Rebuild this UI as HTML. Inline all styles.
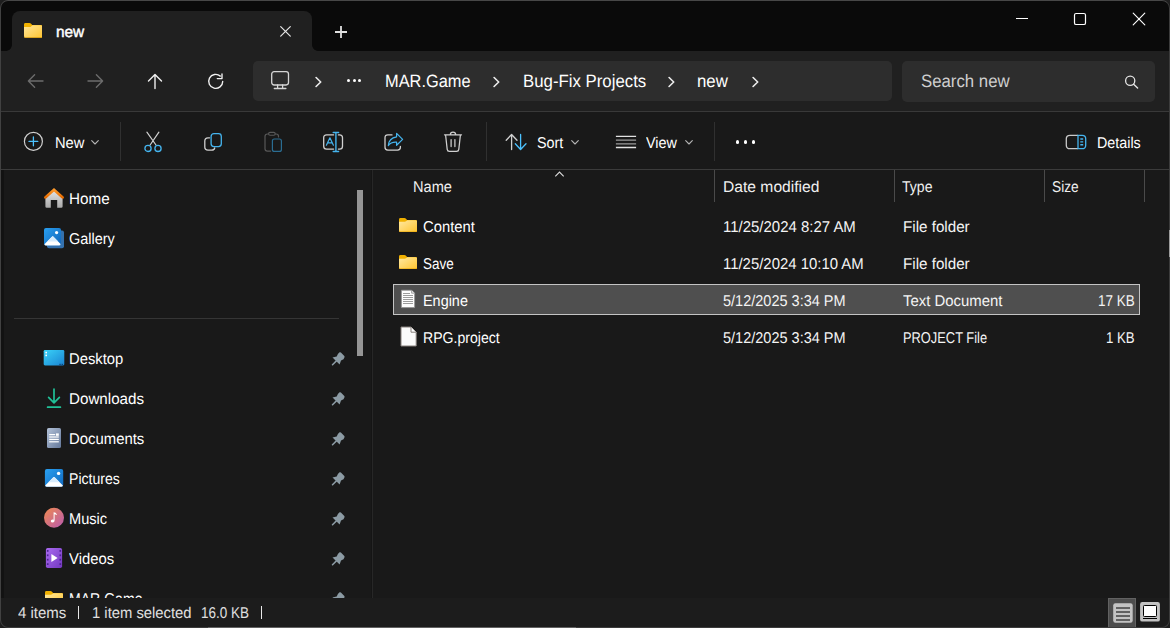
<!DOCTYPE html>
<html>
<head>
<meta charset="utf-8">
<title>new - File Explorer</title>
<style>
*{box-sizing:border-box;margin:0;padding:0}
html,body{width:1170px;height:628px;overflow:hidden;background:#1e1e1e;}
body{font-family:"Liberation Sans",sans-serif;color:#fff;position:relative;font-size:15px;text-rendering:geometricPrecision;}
.abs{position:absolute;display:block}
#win{position:absolute;left:0;top:0;width:1170px;height:628px;background:#191919;border-radius:8px;overflow:hidden;}
#frame{position:absolute;left:0;top:0;width:1170px;height:628px;border:1px solid #3c3c3c;border-top-color:#474747;border-left-color:#414141;border-radius:8px;pointer-events:none;}
#tab{position:absolute;left:12px;top:11px;width:300px;height:40px;background:#202020;border-radius:8px 8px 0 0;}
#tab:before,#tab:after{content:"";position:absolute;bottom:0;width:6px;height:6px;}
#tab:before{left:-6px;background:radial-gradient(circle at 0 0,rgba(32,32,32,0) 5.5px,#202020 6.2px);}
#tab:after{right:-6px;background:radial-gradient(circle at 100% 0,rgba(32,32,32,0) 5.5px,#202020 6.2px);}
.t{position:absolute;white-space:nowrap;line-height:20px;height:20px;transform-origin:0 0;font-variant-ligatures:none;}
</style>
</head>
<body>
<div id="win">
<div class="abs" style="left:0px;top:0px;width:1170px;height:51px;background:#0a0a0a;"></div>
<div id="tab"></div>
<svg class="abs" style="left:23.8px;top:23.2px;" width="18.4" height="14.8" viewBox="0.5 0.7 18.5 14.8" preserveAspectRatio="none"><defs><linearGradient id="fg1" x1="0" y1="0" x2="1" y2="1"><stop offset="0" stop-color="#ffe69a"/><stop offset="1" stop-color="#ffc531"/></linearGradient></defs><path d="M0.5 2.2 Q0.5 0.7 2 0.7 H6 Q6.8 0.7 7.4 1.3 L8.8 2.7 H17.5 Q19 2.7 19 4.2 V6 H0.5 Z" fill="#f2b200"/><path d="M0.5 4.6 H6.4 Q7.1 4.6 7.7 4.1 L9 3 H17.5 Q19 3 19 4.5 V14 Q19 15.5 17.5 15.5 H2 Q0.5 15.5 0.5 14 Z" fill="url(#fg1)"/><path d="M0.5 14 Q0.5 15.5 2 15.5 H17.5 Q19 15.5 19 14 V13.4 Q19 14.9 17.5 14.9 H2 Q0.5 14.9 0.5 13.4Z" fill="#e9a400"/></svg>
<div class="t" style="left:55.80px;top:23px;font-size:15.5px;transform:scaleX(0.9930);color:#fff;-webkit-text-stroke:0.45px #fff;">new</div>
<svg class="abs" style="left:278px;top:24px;" width="15" height="15" viewBox="0 0 15 15" preserveAspectRatio="none"><path d="M2.7 2.6 L12.3 12.2 M12.3 2.6 L2.7 12.2" stroke="#e6e6e6" stroke-width="1.2" stroke-linecap="round" fill="none"/></svg>
<svg class="abs" style="left:333px;top:24px;" width="16" height="16" viewBox="0 0 16 16" preserveAspectRatio="none"><path d="M8 2 V14 M2 8 H14" stroke="#e0e0e0" stroke-width="1.8" fill="none"/></svg>
<svg class="abs" style="left:1014px;top:10px;" width="16" height="16" viewBox="0 0 16 16" preserveAspectRatio="none"><path d="M2 8.5 H14" stroke="#fff" stroke-width="1.1" fill="none"/></svg>
<svg class="abs" style="left:1072px;top:11px;" width="16" height="16" viewBox="0 0 16 16" preserveAspectRatio="none"><rect x="2.5" y="2.5" width="11" height="11" rx="1.6" stroke="#fff" stroke-width="1.2" fill="none"/></svg>
<svg class="abs" style="left:1131px;top:11px;" width="16" height="16" viewBox="0 0 16 16" preserveAspectRatio="none"><path d="M2.2 2.2 L13.8 13.8 M13.8 2.2 L2.2 13.8" stroke="#fff" stroke-width="1.15" stroke-linecap="round" fill="none"/></svg>
<div class="abs" style="left:0px;top:51px;width:1170px;height:60px;background:#202020;"></div>
<svg class="abs" style="left:20px;top:66px;" width="30" height="30" viewBox="0 0 30 30" preserveAspectRatio="none"><path d="M23 15 H8.6 M14.6 8.8 L8.4 15 L14.6 21.2" stroke="#6c6c6c" stroke-width="1.4" stroke-linecap="round" stroke-linejoin="round" fill="none"/></svg>
<svg class="abs" style="left:80px;top:66px;" width="30" height="30" viewBox="0 0 30 30" preserveAspectRatio="none"><path d="M8 15 H22.4 M16.4 8.8 L22.6 15 L16.4 21.2" stroke="#6c6c6c" stroke-width="1.4" stroke-linecap="round" stroke-linejoin="round" fill="none"/></svg>
<svg class="abs" style="left:140px;top:66px;" width="30" height="30" viewBox="0 0 30 30" preserveAspectRatio="none"><path d="M15 22.6 V8.6 M8.5 15 L15 8.4 L21.5 15" stroke="#f0f0f0" stroke-width="1.4" stroke-linecap="round" stroke-linejoin="round" fill="none"/></svg>
<svg class="abs" style="left:200px;top:66px;" width="32" height="30" viewBox="0 0 32 30" preserveAspectRatio="none"><path d="M22.7 15.4 A7 7 0 1 1 20.3 10.1 M22 8 V12.6 H17.3" stroke="#f0f0f0" stroke-width="1.4" stroke-linecap="round" stroke-linejoin="round" fill="none"/></svg>
<div class="abs" style="left:253px;top:61px;width:639px;height:40px;background:#2d2d2d;border-radius:5px;"></div>
<svg class="abs" style="left:268px;top:68px;" width="24" height="24" viewBox="0 0 24 24" preserveAspectRatio="none"><rect x="3.7" y="3.7" width="16.8" height="13.3" rx="2.4" stroke="#d6d6d6" stroke-width="1.3" fill="none"/><path d="M9.6 17 V20.3 M14.6 17 V20.3 M6.3 20.5 H17.9" stroke="#d6d6d6" stroke-width="1.3" stroke-linecap="round" fill="none"/></svg>
<svg class="abs" style="left:314.7px;top:75.6px;" width="8" height="12" viewBox="0 0 8 12" preserveAspectRatio="none"><path d="M1.1 1.5 L5.7 6 L1.1 10.5" stroke="#ececec" stroke-width="1.6" stroke-linecap="round" stroke-linejoin="round" fill="none"/></svg>
<svg class="abs" style="left:492.7px;top:75.6px;" width="8" height="12" viewBox="0 0 8 12" preserveAspectRatio="none"><path d="M1.1 1.5 L5.7 6 L1.1 10.5" stroke="#ececec" stroke-width="1.6" stroke-linecap="round" stroke-linejoin="round" fill="none"/></svg>
<svg class="abs" style="left:667.7px;top:75.6px;" width="8" height="12" viewBox="0 0 8 12" preserveAspectRatio="none"><path d="M1.1 1.5 L5.7 6 L1.1 10.5" stroke="#ececec" stroke-width="1.6" stroke-linecap="round" stroke-linejoin="round" fill="none"/></svg>
<svg class="abs" style="left:752.2px;top:75.6px;" width="8" height="12" viewBox="0 0 8 12" preserveAspectRatio="none"><path d="M1.1 1.5 L5.7 6 L1.1 10.5" stroke="#ececec" stroke-width="1.6" stroke-linecap="round" stroke-linejoin="round" fill="none"/></svg>
<div class="abs" style="left:346.7px;top:78.9px;width:3px;height:3px;border-radius:50%;background:#fff"></div>
<div class="abs" style="left:352.5px;top:78.9px;width:3px;height:3px;border-radius:50%;background:#fff"></div>
<div class="abs" style="left:358.3px;top:78.9px;width:3px;height:3px;border-radius:50%;background:#fff"></div>
<div class="t" style="left:384.60px;top:71px;font-size:17.8px;transform:scaleX(0.9220);color:#fff;">MAR.Game</div>
<div class="t" style="left:522.60px;top:71px;font-size:17.8px;transform:scaleX(0.9445);color:#fff;">Bug-Fix Projects</div>
<div class="t" style="left:697.40px;top:71px;font-size:17.8px;transform:scaleX(0.9450);color:#fff;">new</div>
<div class="abs" style="left:902px;top:61px;width:253.3px;height:41px;background:#2d2d2d;border-radius:5px;"></div>
<div class="t" style="left:920.80px;top:71px;font-size:17.8px;transform:scaleX(0.9442);color:#cfcfcf;">Search new</div>
<svg class="abs" style="left:1123px;top:72.6px;" width="18" height="18" viewBox="0 0 18 18" preserveAspectRatio="none"><circle cx="7.2" cy="7.8" r="4.6" stroke="#e4e4e4" stroke-width="1.3" fill="none"/><path d="M10.6 11.2 L14.6 15.1" stroke="#e4e4e4" stroke-width="1.4" stroke-linecap="round"/></svg>
<div class="abs" style="left:0px;top:111px;width:1170px;height:1px;background:#393939;"></div>
<div class="abs" style="left:0px;top:112px;width:1170px;height:57px;background:#191919;"></div>
<div class="abs" style="left:0px;top:169px;width:1170px;height:1px;background:#3b3b3b;"></div>
<svg class="abs" style="left:22px;top:130px;" width="24" height="24" viewBox="0 0 24 24" preserveAspectRatio="none"><circle cx="11.4" cy="11.4" r="9" stroke="#cfcfcf" stroke-width="1.2" fill="none"/><path d="M11.4 7 V15.8 M7 11.4 H15.8" stroke="#4cc2ff" stroke-width="1.3" stroke-linecap="round"/></svg>
<div class="t" style="left:54.60px;top:134px;font-size:15.6px;transform:scaleX(0.9425);color:#fff;">New</div>
<svg class="abs" style="left:91px;top:139.8px;" width="8" height="5" viewBox="0 0 8 5" preserveAspectRatio="none"><path d="M0.7 0.7 L4 4 L7.3 0.7" stroke="#b4b4b4" stroke-width="1.1" stroke-linecap="round" stroke-linejoin="round" fill="none"/></svg>
<div class="abs" style="left:120px;top:122px;width:1px;height:39px;background:#303030;"></div>
<svg class="abs" style="left:143px;top:130px;" width="22" height="24" viewBox="0 0 22 24" preserveAspectRatio="none"><path d="M3.9 2.2 L13 15 M15.9 2.2 L7.1 15" stroke="#d0d0d0" stroke-width="1.2" stroke-linecap="round" fill="none"/><circle cx="5" cy="18.4" r="3.1" stroke="#45b4ee" stroke-width="1.3" fill="none"/><circle cx="15" cy="18.4" r="3.1" stroke="#45b4ee" stroke-width="1.3" fill="none"/></svg>
<svg class="abs" style="left:202px;top:130px;" width="24" height="24" viewBox="0 0 24 24" preserveAspectRatio="none"><path d="M7.6 7.8 H6 Q2.8 7.8 2.8 11 V17 Q2.8 20.1 6 20.1 H9.6 Q12.6 20.1 12.7 17.9" stroke="#d0d0d0" stroke-width="1.3" stroke-linecap="round" fill="none"/><rect x="9.1" y="3.6" width="10.2" height="13" rx="2.8" stroke="#45b4ee" stroke-width="1.3" fill="none"/></svg>
<svg class="abs" style="left:262px;top:130px;" width="24" height="24" viewBox="0 0 24 24" preserveAspectRatio="none"><path d="M8.6 21.2 H5.4 Q3 21.2 3 18.8 V6.4 Q3 4 5.4 4 H6.4 M13.4 4 H14.2 Q16.5 4 16.5 6.2 V7" stroke="#585858" stroke-width="1.2" stroke-linecap="round" fill="none"/><rect x="6.6" y="2.4" width="6.6" height="2.8" rx="1.4" stroke="#585858" stroke-width="1.1" fill="none"/><rect x="10.4" y="9" width="9" height="12.4" rx="2" stroke="#2b6d92" stroke-width="1.2" fill="none"/></svg>
<svg class="abs" style="left:321px;top:130px;" width="24" height="24" viewBox="0 0 24 24" preserveAspectRatio="none"><path d="M12.6 4.9 H5.6 Q2.7 4.9 2.7 7.8 V16.2 Q2.7 19.1 5.6 19.1 H12.6 M17.4 4.9 H18.6 Q21.5 4.9 21.5 7.8 V16.2 Q21.5 19.1 18.6 19.1 H17.4" stroke="#d0d0d0" stroke-width="1.3" stroke-linecap="round" fill="none"/><path d="M14.9 2.6 V21.4 M12.2 2.5 H17.6 M12.2 21.5 H17.6" stroke="#45b4ee" stroke-width="1.4" stroke-linecap="round" fill="none"/><path d="M5.4 15.2 L8.9 7.8 L12.4 15.2 M6.6 12.8 H11.2" stroke="#45b4ee" stroke-width="1.2" stroke-linecap="round" stroke-linejoin="round" fill="none"/></svg>
<svg class="abs" style="left:382px;top:130px;" width="24" height="24" viewBox="0 0 24 24" preserveAspectRatio="none"><path d="M10 4.9 H5.8 Q3 4.9 3 7.7 V17.3 Q3 20.1 5.8 20.1 H15.6 Q18.4 20.1 18.4 17.3 V16.4" stroke="#d0d0d0" stroke-width="1.3" stroke-linecap="round" fill="none"/><path d="M14.6 3.4 L20.6 9.4 L14.6 15.3 V12.2 Q9 11.8 6.3 15.6 Q6.8 8 14.6 6.8 Z" stroke="#45b4ee" stroke-width="1.2" stroke-linejoin="round" fill="none"/></svg>
<svg class="abs" style="left:441px;top:130px;" width="24" height="24" viewBox="0 0 24 24" preserveAspectRatio="none"><path d="M3.5 4.8 H20.5 M9.3 4.6 Q9.4 2.2 12 2.2 Q14.6 2.2 14.7 4.6 M4.6 5 L6.2 19.4 Q6.4 21.4 8.4 21.4 H15.6 Q17.6 21.4 17.8 19.4 L19.4 5 M10.1 9.6 V16.6 M13.9 9.6 V16.6" stroke="#d0d0d0" stroke-width="1.25" stroke-linecap="round" stroke-linejoin="round" fill="none"/></svg>
<div class="abs" style="left:486px;top:122px;width:1px;height:39px;background:#303030;"></div>
<svg class="abs" style="left:504px;top:130px;" width="24" height="24" viewBox="0 0 24 24" preserveAspectRatio="none"><path d="M7.6 19.6 V4.6 M2.2 10.2 L7.6 4.5 L13 10.2" stroke="#d0d0d0" stroke-width="1.3" stroke-linecap="round" stroke-linejoin="round" fill="none"/><path d="M16.6 4.4 V19.4 M11.3 13.8 L16.6 19.5 L22 13.8" stroke="#4cc2ff" stroke-width="1.3" stroke-linecap="round" stroke-linejoin="round" fill="none"/></svg>
<div class="t" style="left:536.80px;top:134px;font-size:15.6px;transform:scaleX(0.9196);color:#fff;">Sort</div>
<svg class="abs" style="left:571.1px;top:139.8px;" width="8" height="5" viewBox="0 0 8 5" preserveAspectRatio="none"><path d="M0.7 0.7 L4 4 L7.3 0.7" stroke="#b4b4b4" stroke-width="1.1" stroke-linecap="round" stroke-linejoin="round" fill="none"/></svg>
<svg class="abs" style="left:614px;top:130px;" width="24" height="24" viewBox="0 0 24 24" preserveAspectRatio="none"><path d="M1.9 6.4 H22.1 M1.9 17.5 H22.1" stroke="#e2e2e2" stroke-width="1.3"/><path d="M1.9 10.1 H22.1 M1.9 13.8 H22.1" stroke="#9c9c9c" stroke-width="1.3"/></svg>
<div class="t" style="left:646.20px;top:134px;font-size:15.6px;transform:scaleX(0.9226);color:#fff;">View</div>
<svg class="abs" style="left:685px;top:139.8px;" width="8" height="5" viewBox="0 0 8 5" preserveAspectRatio="none"><path d="M0.7 0.7 L4 4 L7.3 0.7" stroke="#b4b4b4" stroke-width="1.1" stroke-linecap="round" stroke-linejoin="round" fill="none"/></svg>
<div class="abs" style="left:714px;top:122px;width:1px;height:39px;background:#303030;"></div>
<div class="abs" style="left:735.7px;top:140.1px;width:3.8px;height:3.8px;border-radius:50%;background:#fff"></div>
<div class="abs" style="left:743.7px;top:140.1px;width:3.8px;height:3.8px;border-radius:50%;background:#fff"></div>
<div class="abs" style="left:751.7px;top:140.1px;width:3.8px;height:3.8px;border-radius:50%;background:#fff"></div>
<svg class="abs" style="left:1064px;top:132px;" width="24" height="20.2" viewBox="0 0 24 20.2" preserveAspectRatio="none"><path d="M14 3.3 H6 Q2.3 3.3 2.3 6.8 V13.2 Q2.3 16.7 6 16.7 H14" stroke="#c9c9c9" stroke-width="1.3" fill="none"/><path d="M14 3.3 H18.2 Q21.7 3.3 21.7 6.8 V13.2 Q21.7 16.7 18.2 16.7 H14 Z" stroke="#45b4ee" stroke-width="1.3" fill="none"/><path d="M16.3 7 H19.2 M16.3 9.9 H19.2 M16.3 12.8 H19.2" stroke="#45b4ee" stroke-width="1.4"/></svg>
<div class="t" style="left:1096.80px;top:134px;font-size:15.6px;transform:scaleX(0.9182);color:#fff;">Details</div>
<div class="abs" style="left:0px;top:170px;width:1170px;height:428px;background:#191919;"></div>
<div class="abs" style="left:1px;top:170px;width:3px;height:428px;background:#121212;"></div>
<div class="abs" style="left:357px;top:190px;width:6px;height:166px;background:#969696;"></div>
<div class="abs" style="left:372px;top:170px;width:1px;height:428px;background:#272727;"></div>
<div class="abs" style="left:371px;top:170px;width:1px;height:428px;background:#151515;"></div>
<div class="abs" style="left:14px;top:317.5px;width:325px;height:1px;background:#353535;"></div>
<svg class="abs" style="left:43px;top:187px;" width="22" height="22" viewBox="0 0 22 22" preserveAspectRatio="none"><defs><linearGradient id="hg" x1="0" y1="0" x2="0" y2="1"><stop offset="0" stop-color="#e6e6e6"/><stop offset="1" stop-color="#a9a9a9"/></linearGradient><linearGradient id="hr" x1="0" y1="0" x2="0" y2="1"><stop offset="0" stop-color="#ff9a2a"/><stop offset="1" stop-color="#e46a00"/></linearGradient></defs><path d="M2.4 9.8 L11 2.8 L19.6 9.8 V19.4 Q19.6 20.8 18.2 20.8 H14.2 V13 H7.8 V20.8 H3.8 Q2.4 20.8 2.4 19.4 Z" fill="url(#hg)"/><path d="M2.3 10.4 L11 2.8 L19.7 10.4" stroke="url(#hr)" stroke-width="2.6" stroke-linecap="round" stroke-linejoin="miter" fill="none"/></svg>
<div class="t" style="left:69.40px;top:190px;font-size:15.6px;transform:scaleX(0.9784);color:#fff;">Home</div>
<svg class="abs" style="left:43px;top:227px;" width="22" height="22" viewBox="0 0 22 22" preserveAspectRatio="none"><defs><linearGradient id="gg" x1="0" y1="0" x2="1" y2="1"><stop offset="0" stop-color="#2aa0f0"/><stop offset="1" stop-color="#0f63b8"/></linearGradient></defs><rect x="4" y="3.6" width="17" height="17.6" rx="2" fill="#3d8fe0" opacity="0.75"/><rect x="1" y="1" width="17" height="17.6" rx="2" fill="url(#gg)"/><path d="M1.4 17.2 L9.2 9.6 Q9.7 9.1 10.2 9.6 L17.6 17 Q17.6 18.6 16 18.6 H3 Q1.6 18.6 1.4 17.2Z" fill="#fff"/><path d="M4.2 14.6 L9.2 9.6 Q9.7 9.1 10.2 9.6 L15.2 14.6 Z" fill="#d7ebfb"/><circle cx="13.6" cy="5.6" r="1.6" fill="#fff"/></svg>
<div class="t" style="left:69.40px;top:230px;font-size:15.6px;transform:scaleX(0.9271);color:#fff;">Gallery</div>
<svg class="abs" style="left:43px;top:349px;" width="22" height="18" viewBox="0 0 22 18" preserveAspectRatio="none"><defs><linearGradient id="dg" x1="0" y1="0" x2="1" y2="1"><stop offset="0" stop-color="#3ad2f8"/><stop offset="1" stop-color="#1a84d2"/></linearGradient></defs><rect x="0.7" y="1" width="20.6" height="15.4" rx="1.3" fill="url(#dg)"/><rect x="2.4" y="2.8" width="1.6" height="1.6" fill="#fff"/><rect x="2.4" y="5.6" width="1.6" height="1.6" fill="#fff"/><rect x="16.4" y="14.8" width="1.3" height="1.3" fill="#0c3f74"/><rect x="18.6" y="14.8" width="1.3" height="1.3" fill="#0c3f74"/></svg>
<div class="t" style="left:69.40px;top:350px;font-size:15.6px;transform:scaleX(0.9485);color:#fff;">Desktop</div>
<svg class="abs" style="left:44px;top:387px;" width="20" height="22" viewBox="0 0 20 22" preserveAspectRatio="none"><path d="M10 2 V15.6 M4.6 10.4 L10 15.9 L15.4 10.4 M3.6 20.2 H16.4" stroke="#20c198" stroke-width="1.7" stroke-linecap="round" stroke-linejoin="round" fill="none"/></svg>
<div class="t" style="left:69.40px;top:390px;font-size:15.6px;transform:scaleX(0.9728);color:#fff;">Downloads</div>
<svg class="abs" style="left:45px;top:427px;" width="18" height="22" viewBox="0 0 18 22" preserveAspectRatio="none"><defs><linearGradient id="dcg" x1="0" y1="0" x2="1" y2="1"><stop offset="0" stop-color="#b3c2d8"/><stop offset="1" stop-color="#64789a"/></linearGradient></defs><rect x="2" y="1" width="14" height="20" rx="1.6" fill="url(#dcg)"/><rect x="4.2" y="7" width="6" height="1.2" fill="#fff"/><rect x="4.2" y="9.4" width="9.6" height="1.2" fill="#fff"/><rect x="4.2" y="11.8" width="9.6" height="1.2" fill="#fff"/><rect x="4.2" y="14.2" width="9.6" height="1.2" fill="#fff"/><rect x="11" y="6.4" width="2.8" height="2.4" fill="#fff"/></svg>
<div class="t" style="left:69.40px;top:430px;font-size:15.6px;transform:scaleX(0.9544);color:#fff;">Documents</div>
<svg class="abs" style="left:44px;top:468px;" width="20" height="20" viewBox="0 0 20 20" preserveAspectRatio="none"><defs><linearGradient id="pg" x1="0" y1="0" x2="1" y2="1"><stop offset="0" stop-color="#2aa0f0"/><stop offset="1" stop-color="#1068bf"/></linearGradient></defs><rect x="0.9" y="1" width="18.3" height="17.8" rx="2" fill="url(#pg)"/><path d="M1.2 17.4 L9.4 9.2 Q10 8.6 10.6 9.2 L18.9 17.4 Q18.7 18.8 17.2 18.8 H2.9 Q1.4 18.8 1.2 17.4Z" fill="#fff"/><path d="M4.4 14.2 L9.4 9.2 Q10 8.6 10.6 9.2 L15.6 14.2 Z" fill="#d7ebfb"/><circle cx="14.6" cy="5.4" r="1.7" fill="#fff"/></svg>
<div class="t" style="left:69.40px;top:470px;font-size:15.6px;transform:scaleX(0.9033);color:#fff;">Pictures</div>
<svg class="abs" style="left:43px;top:507px;" width="22" height="22" viewBox="0 0 22 22" preserveAspectRatio="none"><defs><linearGradient id="mg" x1="0" y1="0" x2="1" y2="1"><stop offset="0" stop-color="#f08a4e"/><stop offset="1" stop-color="#b85ab0"/></linearGradient></defs><circle cx="11" cy="10.8" r="10" fill="url(#mg)"/><path d="M10.6 5.2 Q12.6 5 14 7.6 L13.4 8 Q12.4 7 11.6 7.2 V13.6 Q11.6 15.6 9.6 15.6 Q7.8 15.6 7.8 14.1 Q7.8 12.6 9.6 12.6 Q10.2 12.6 10.6 12.8 Z" fill="#fff"/></svg>
<div class="t" style="left:69.40px;top:510px;font-size:15.6px;transform:scaleX(0.9374);color:#fff;">Music</div>
<svg class="abs" style="left:44px;top:547px;" width="20" height="22" viewBox="0 0 20 22" preserveAspectRatio="none"><defs><linearGradient id="vg" x1="0" y1="0" x2="1" y2="1"><stop offset="0" stop-color="#a96af0"/><stop offset="1" stop-color="#7438c0"/></linearGradient></defs><rect x="1.9" y="1" width="16.2" height="20" rx="1.8" fill="url(#vg)"/><path d="M7.4 7 L13.6 11 L7.4 15 Z" fill="#fff"/><g fill="#4b2390"><rect x="2.9" y="3" width="1.6" height="1.8"/><rect x="2.9" y="7.4" width="1.6" height="1.8"/><rect x="2.9" y="11.8" width="1.6" height="1.8"/><rect x="2.9" y="16.2" width="1.6" height="1.8"/><rect x="15.5" y="3" width="1.6" height="1.8"/><rect x="15.5" y="7.4" width="1.6" height="1.8"/><rect x="15.5" y="11.8" width="1.6" height="1.8"/><rect x="15.5" y="16.2" width="1.6" height="1.8"/></g></svg>
<div class="t" style="left:69.40px;top:550px;font-size:15.6px;transform:scaleX(0.9515);color:#fff;">Videos</div>
<svg class="abs" style="left:44.9px;top:591.4px;" width="18.1" height="14.3" viewBox="0.5 0.7 18.5 14.8" preserveAspectRatio="none"><defs><linearGradient id="fgs" x1="0" y1="0" x2="1" y2="1"><stop offset="0" stop-color="#ffe9a2"/><stop offset="1" stop-color="#ffc42e"/></linearGradient></defs><path d="M0.5 2.2 Q0.5 0.7 2 0.7 H6 Q6.8 0.7 7.4 1.3 L8.8 2.7 H17.5 Q19 2.7 19 4.2 V6 H0.5 Z" fill="#f0b000"/><path d="M0.5 4.6 H6.4 Q7.1 4.6 7.7 4.1 L9 3 H17.5 Q19 3 19 4.5 V14 Q19 15.5 17.5 15.5 H2 Q0.5 15.5 0.5 14 Z" fill="url(#fgs)"/><path d="M0.5 14 Q0.5 15.5 2 15.5 H17.5 Q19 15.5 19 14 V13.3 Q19 14.8 17.5 14.8 H2 Q0.5 14.8 0.5 13.3Z" fill="#e6a100"/></svg>
<div class="t" style="left:69.40px;top:590px;font-size:15.6px;transform:scaleX(0.9018);color:#fff;">MAR.Game</div>
<svg class="abs" style="left:331.3px;top:351.9px;" width="14" height="14" viewBox="0 0 14 14" preserveAspectRatio="none"><path d="M8.56 0.36 Q9.3 0 9.9 0.6 L13.3 4.1 Q13.9 4.8 13.4 5.5 L12.5 7.2 L10 8.5 L8.6 12.6 L1.5 5.6 L5.7 4.5 L6.9 2 Z" fill="#8c9ba4"/><path d="M5.4 8.9 L1.5 12.7" stroke="#8c9ba4" stroke-width="1.5" stroke-linecap="round"/></svg>
<svg class="abs" style="left:331.3px;top:391.9px;" width="14" height="14" viewBox="0 0 14 14" preserveAspectRatio="none"><path d="M8.56 0.36 Q9.3 0 9.9 0.6 L13.3 4.1 Q13.9 4.8 13.4 5.5 L12.5 7.2 L10 8.5 L8.6 12.6 L1.5 5.6 L5.7 4.5 L6.9 2 Z" fill="#8c9ba4"/><path d="M5.4 8.9 L1.5 12.7" stroke="#8c9ba4" stroke-width="1.5" stroke-linecap="round"/></svg>
<svg class="abs" style="left:331.3px;top:431.9px;" width="14" height="14" viewBox="0 0 14 14" preserveAspectRatio="none"><path d="M8.56 0.36 Q9.3 0 9.9 0.6 L13.3 4.1 Q13.9 4.8 13.4 5.5 L12.5 7.2 L10 8.5 L8.6 12.6 L1.5 5.6 L5.7 4.5 L6.9 2 Z" fill="#8c9ba4"/><path d="M5.4 8.9 L1.5 12.7" stroke="#8c9ba4" stroke-width="1.5" stroke-linecap="round"/></svg>
<svg class="abs" style="left:331.3px;top:471.9px;" width="14" height="14" viewBox="0 0 14 14" preserveAspectRatio="none"><path d="M8.56 0.36 Q9.3 0 9.9 0.6 L13.3 4.1 Q13.9 4.8 13.4 5.5 L12.5 7.2 L10 8.5 L8.6 12.6 L1.5 5.6 L5.7 4.5 L6.9 2 Z" fill="#8c9ba4"/><path d="M5.4 8.9 L1.5 12.7" stroke="#8c9ba4" stroke-width="1.5" stroke-linecap="round"/></svg>
<svg class="abs" style="left:331.3px;top:511.9px;" width="14" height="14" viewBox="0 0 14 14" preserveAspectRatio="none"><path d="M8.56 0.36 Q9.3 0 9.9 0.6 L13.3 4.1 Q13.9 4.8 13.4 5.5 L12.5 7.2 L10 8.5 L8.6 12.6 L1.5 5.6 L5.7 4.5 L6.9 2 Z" fill="#8c9ba4"/><path d="M5.4 8.9 L1.5 12.7" stroke="#8c9ba4" stroke-width="1.5" stroke-linecap="round"/></svg>
<svg class="abs" style="left:331.3px;top:551.9px;" width="14" height="14" viewBox="0 0 14 14" preserveAspectRatio="none"><path d="M8.56 0.36 Q9.3 0 9.9 0.6 L13.3 4.1 Q13.9 4.8 13.4 5.5 L12.5 7.2 L10 8.5 L8.6 12.6 L1.5 5.6 L5.7 4.5 L6.9 2 Z" fill="#8c9ba4"/><path d="M5.4 8.9 L1.5 12.7" stroke="#8c9ba4" stroke-width="1.5" stroke-linecap="round"/></svg>
<svg class="abs" style="left:331.3px;top:591.9px;" width="14" height="14" viewBox="0 0 14 14" preserveAspectRatio="none"><path d="M8.56 0.36 Q9.3 0 9.9 0.6 L13.3 4.1 Q13.9 4.8 13.4 5.5 L12.5 7.2 L10 8.5 L8.6 12.6 L1.5 5.6 L5.7 4.5 L6.9 2 Z" fill="#8c9ba4"/><path d="M5.4 8.9 L1.5 12.7" stroke="#8c9ba4" stroke-width="1.5" stroke-linecap="round"/></svg>
<div class="t" style="left:412.80px;top:178px;font-size:15.6px;transform:scaleX(0.9375);color:#f0f0f0;">Name</div>
<div class="t" style="left:722.80px;top:178px;font-size:15.6px;transform:scaleX(1.0026);color:#f0f0f0;">Date modified</div>
<div class="t" style="left:902.20px;top:178px;font-size:15.6px;transform:scaleX(0.9024);color:#f0f0f0;">Type</div>
<div class="t" style="left:1052.20px;top:178px;font-size:15.6px;transform:scaleX(0.8797);color:#f0f0f0;">Size</div>
<div class="abs" style="left:714px;top:170px;width:1px;height:32px;background:#4a4a4a;"></div>
<div class="abs" style="left:894px;top:170px;width:1px;height:32px;background:#4a4a4a;"></div>
<div class="abs" style="left:1044px;top:170px;width:1px;height:32px;background:#4a4a4a;"></div>
<div class="abs" style="left:1144px;top:170px;width:1px;height:32px;background:#4a4a4a;"></div>
<svg class="abs" style="left:554px;top:170.5px;" width="11" height="7" viewBox="0 0 11 7" preserveAspectRatio="none"><path d="M1.3 5.3 L5.5 1.1 L9.7 5.3" stroke="#dcdcdc" stroke-width="1.1" fill="none"/></svg>
<div class="abs" style="left:393px;top:284px;width:747px;height:30.5px;background:#4f4f4f;border:1px solid #c4c4c4;"></div>
<svg class="abs" style="left:398.9px;top:217.8px;" width="18.1" height="14.3" viewBox="0.5 0.7 18.5 14.8" preserveAspectRatio="none"><defs><linearGradient id="ff1" x1="0" y1="0" x2="1" y2="1"><stop offset="0" stop-color="#ffe9a2"/><stop offset="1" stop-color="#ffc42e"/></linearGradient></defs><path d="M0.5 2.2 Q0.5 0.7 2 0.7 H6 Q6.8 0.7 7.4 1.3 L8.8 2.7 H17.5 Q19 2.7 19 4.2 V6 H0.5 Z" fill="#f0b000"/><path d="M0.5 4.6 H6.4 Q7.1 4.6 7.7 4.1 L9 3 H17.5 Q19 3 19 4.5 V14 Q19 15.5 17.5 15.5 H2 Q0.5 15.5 0.5 14 Z" fill="url(#ff1)"/><path d="M0.5 14 Q0.5 15.5 2 15.5 H17.5 Q19 15.5 19 14 V13.3 Q19 14.8 17.5 14.8 H2 Q0.5 14.8 0.5 13.3Z" fill="#e6a100"/></svg>
<svg class="abs" style="left:398.9px;top:254.8px;" width="18.1" height="14.3" viewBox="0.5 0.7 18.5 14.8" preserveAspectRatio="none"><defs><linearGradient id="ff2" x1="0" y1="0" x2="1" y2="1"><stop offset="0" stop-color="#ffe9a2"/><stop offset="1" stop-color="#ffc42e"/></linearGradient></defs><path d="M0.5 2.2 Q0.5 0.7 2 0.7 H6 Q6.8 0.7 7.4 1.3 L8.8 2.7 H17.5 Q19 2.7 19 4.2 V6 H0.5 Z" fill="#f0b000"/><path d="M0.5 4.6 H6.4 Q7.1 4.6 7.7 4.1 L9 3 H17.5 Q19 3 19 4.5 V14 Q19 15.5 17.5 15.5 H2 Q0.5 15.5 0.5 14 Z" fill="url(#ff2)"/><path d="M0.5 14 Q0.5 15.5 2 15.5 H17.5 Q19 15.5 19 14 V13.3 Q19 14.8 17.5 14.8 H2 Q0.5 14.8 0.5 13.3Z" fill="#e6a100"/></svg>
<svg class="abs" style="left:400px;top:289px;" width="16" height="20" viewBox="0 0 16 20" preserveAspectRatio="none"><path d="M1.4 1.2 H11.6 L14.6 4.2 V18.6 H1.4 Z" fill="#fdfdfd" stroke="#8f8f8f" stroke-width="0.8"/><path d="M11.6 1.2 V4.2 H14.6" fill="#e8e8e8" stroke="#8f8f8f" stroke-width="0.8"/><path d="M3 4.5 H10 M3 6.5 H13 M3 8.5 H13 M3 10.5 H13 M3 12.5 H13 M3 14.5 H13" stroke="#9c9c9c" stroke-width="1"/></svg>
<svg class="abs" style="left:399.5px;top:325.5px;" width="18" height="22" viewBox="0 0 18 22" preserveAspectRatio="none"><path d="M1 1 H11 L16.2 6.2 V20 H1 Z" fill="#fbfbfb" stroke="#857f7a" stroke-width="1"/><path d="M11 1 V6.2 H16.2" fill="#fff" stroke="#857f7a" stroke-width="1"/></svg>
<div class="t" style="left:423.40px;top:218px;font-size:15.6px;transform:scaleX(0.9497);color:#fff;">Content</div>
<div class="t" style="left:722.80px;top:218px;font-size:15.6px;transform:scaleX(0.9596);color:#f4f4f4;">11/25/2024 8:27 AM</div>
<div class="t" style="left:902.60px;top:218px;font-size:15.6px;transform:scaleX(0.9737);color:#f4f4f4;">File folder</div>
<div class="t" style="left:423.40px;top:255px;font-size:15.6px;transform:scaleX(0.8636);color:#fff;">Save</div>
<div class="t" style="left:722.80px;top:255px;font-size:15.6px;transform:scaleX(0.9562);color:#f4f4f4;">11/25/2024 10:10 AM</div>
<div class="t" style="left:902.60px;top:255px;font-size:15.6px;transform:scaleX(0.9737);color:#f4f4f4;">File folder</div>
<div class="t" style="left:423.40px;top:292px;font-size:15.6px;transform:scaleX(0.9248);color:#fff;">Engine</div>
<div class="t" style="left:722.80px;top:292px;font-size:15.6px;transform:scaleX(0.9306);color:#f4f4f4;">5/12/2025 3:34 PM</div>
<div class="t" style="left:902.60px;top:292px;font-size:15.6px;transform:scaleX(0.9563);color:#f4f4f4;">Text Document</div>
<div class="t" style="left:1098.00px;top:292px;font-size:15.6px;transform:scaleX(0.8635);color:#f4f4f4;">17 KB</div>
<div class="t" style="left:423.40px;top:329px;font-size:15.6px;transform:scaleX(0.9029);color:#fff;">RPG.project</div>
<div class="t" style="left:722.80px;top:329px;font-size:15.6px;transform:scaleX(0.9306);color:#f4f4f4;">5/12/2025 3:34 PM</div>
<div class="t" style="left:902.60px;top:329px;font-size:15.6px;transform:scaleX(0.8245);color:#f4f4f4;">PROJECT File</div>
<div class="t" style="left:1106.00px;top:329px;font-size:15.6px;transform:scaleX(0.8491);color:#f4f4f4;">1 KB</div>
<div class="abs" style="left:0px;top:598px;width:1170px;height:30px;background:#1c1c1c;"></div>
<div class="t" style="left:18.00px;top:604px;font-size:15.6px;transform:scaleX(0.9602);color:#e0e0e0;">4 items</div>
<div class="abs" style="left:78px;top:606px;width:1.2px;height:13px;background:#e8e8e8;"></div>
<div class="t" style="left:91.70px;top:604px;font-size:15.6px;transform:scaleX(0.9495);color:#e0e0e0;">1 item selected</div>
<div class="t" style="left:200.60px;top:604px;font-size:15.6px;transform:scaleX(0.8631);color:#e0e0e0;">16.0 KB</div>
<div class="abs" style="left:261.2px;top:606px;width:1.2px;height:13px;background:#e8e8e8;"></div>
<div class="abs" style="left:1108px;top:598px;width:27.5px;height:30px;background:#4d4d4d;border:1px solid #626262;border-bottom:0;"></div>
<svg class="abs" style="left:1113px;top:602.5px;" width="20" height="20" viewBox="0 0 20 20" preserveAspectRatio="none"><rect x="0.2" y="0.3" width="19.5" height="19.4" rx="2.2" fill="#c3c3c3"/><path d="M3 5 H17 M3 9 H17 M3 13 H17 M3 17 H17" stroke="#000" stroke-width="1"/></svg>
<svg class="abs" style="left:1140px;top:602px;" width="20" height="20" viewBox="0 0 20 20" preserveAspectRatio="none"><rect x="0.1" y="0" width="19.8" height="19.6" rx="2.2" fill="#c3c3c3"/><rect x="3.5" y="3.5" width="13" height="11" rx="0.8" fill="#fff" stroke="#000" stroke-width="1"/><path d="M3 16.5 H17" stroke="#000" stroke-width="1"/></svg>
</div>
<div id="frame"></div>
<div class="abs" style="left:208px;top:627px;width:368px;height:1px;background:#626262"></div>
<div class="abs" style="left:1168.6px;top:230px;width:1.4px;height:27px;background:#9c9c9c"></div>
</body>
</html>
